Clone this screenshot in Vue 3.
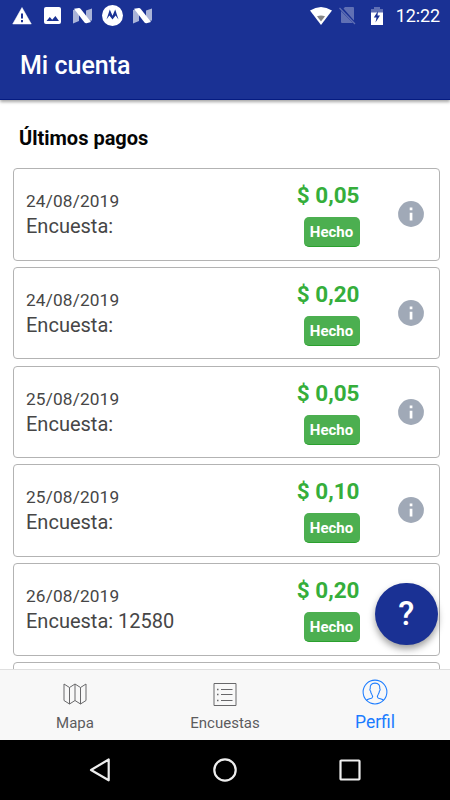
<script setup>
const payments = [
  { date: '24/08/2019', survey: '', amount: '0,05' },
  { date: '24/08/2019', survey: '', amount: '0,20' },
  { date: '25/08/2019', survey: '', amount: '0,05' },
  { date: '25/08/2019', survey: '', amount: '0,10' },
  { date: '26/08/2019', survey: '12580', amount: '0,20' },
]
</script>

<template>
  <div class="screen">
    <header class="header">
      <div class="status">
        <div class="status-left">
          <svg class="warn" width="20" height="18" viewBox="0 0 20 18"><path d="M10 .5 19.300 17H.7Z" fill="#fff" stroke="#fff" stroke-width=".5" stroke-linejoin="round" /><path d="M10 6.500v5M10 13v2.200" stroke="#1a3194" stroke-width="2" /></svg>
          <svg class="photo" width="17" height="17" viewBox="0 0 17 17"><rect width="17" height="17" rx="2" fill="#fff" /><path d="M2.500 14 5.800 10l2.400 2.700 3.200-3.800 3.600 5.100Z" fill="#1a3194" /></svg>
          <svg class="n-first" width="19" height="16" viewBox="0 0 19 16"><path d="M0 2 6 1v12l-6 2.500ZM13 2.500l6-2v12l-6 1Z" fill="#aab4d8" /><path d="M1 .8 6 0q1 0 1.800 1L18 14l-4.500 1.300q-1.200.2-2-.8Z" fill="#fff" /></svg>
          <svg class="moto" width="21" height="21" viewBox="0 0 21 21"><circle cx="10.500" cy="10.500" r="10.500" fill="#fff" /><path d="M4.500 14.500 7.800 4.500l2.700 6.200 2.700-6.200 3.300 10-2.900-4-3.100 4-3.100-4Z" fill="#1a3194" /></svg>
          <svg class="n-second" width="19" height="16" viewBox="0 0 19 16"><path d="M0 2 6 1v12l-6 2.500ZM13 2.500l6-2v12l-6 1Z" fill="#aab4d8" /><path d="M1 .8 6 0q1 0 1.800 1L18 14l-4.500 1.300q-1.200.2-2-.8Z" fill="#fff" /></svg>
        </div>
        <div class="status-right">
          <svg width="22" height="18" viewBox="0 0 22 18"><path d="M0 3.500Q11-3.500 22 3.500L11 18Z" fill="#fff" /><path d="M7 9.200q4-1.600 8 0l-4 5.200Z" fill="#868686" /></svg>
          <svg class="sim" width="17" height="19" viewBox="0 0 17 19"><path d="m4.500 2.500 1.500-1.500h8q1 0 1 1v12.500ZM2 5 14 17H3q-1 0-1-1Z" fill="#6070b4" /><path d="m.5 2 15.500 16" stroke="#6070b4" stroke-width="1.200" /></svg>
          <svg class="battery" width="12" height="18" viewBox="0 0 12 18"><path d="M0 6V2h3V0h6v2h3v4Z" fill="#6070b4" /><path d="M0 5.500h12V18H0Z" fill="#fff" /><path d="M7 4 2.800 10.500h2.700l-1 5L9 8.500H6.500Z" fill="#1a3194" /></svg>
          <span class="clock">12:22</span>
        </div>
      </div>
      <h1 class="title">Mi cuenta</h1>
    </header>

    <main class="content">
      <h2 class="section">Últimos pagos</h2>
      <div class="list">
        <article v-for="(payment, i) in payments" :key="i" class="card">
          <div class="details">
            <div class="date">{{ payment.date }}</div>
            <div class="survey">Encuesta: {{ payment.survey }}</div>
          </div>
          <div class="payment">
            <div class="amount">$ {{ payment.amount }}</div>
            <div class="badge">Hecho</div>
          </div>
          <svg class="info" width="26" height="26" viewBox="0 0 26 26"><circle cx="13" cy="13" r="12.900" fill="#a0a9b7" /><path d="M11.700 6.500h2.700v2.700h-2.700ZM11.700 11.700h2.700v7.800h-2.700Z" fill="#fff" /></svg>
        </article>
        <div class="card"></div>
      </div>
      <button class="help">?</button>
    </main>

    <nav class="tabs">
      <div class="tab">
        <svg class="tab-icon" width="24" height="24" viewBox="0 0 24 24" fill="none" stroke="#68686a" stroke-width="1"><path d="m1 2 5.500 3.500L12 2l5.500 3.500L23 2v16.500L17.500 22 12 18.500 6.500 22 1 18.500ZM6.500 5.500V22M12 2v16.500M17.500 5.500V22" /></svg>
        <span>Mapa</span>
      </div>
      <div class="tab">
        <svg class="tab-icon" width="24" height="24" viewBox="0 0 24 24" fill="none" stroke="#68686a" stroke-width="1"><path d="M1 1.500h22v22H1ZM8 7.500h11.500M8 12.500h11.500M8 18.500h11.500" /><path d="M4 7.500h1.500M4 12.500h1.500M4 18.500h1.500" stroke-width="1.500" /></svg>
        <span>Encuestas</span>
      </div>
      <div class="tab active">
        <svg class="tab-icon" width="26" height="26" viewBox="0 0 26 26" fill="none" stroke="#1b7cff" stroke-width="1.050"><circle cx="13" cy="13" r="11.900" /><path d="M4.500 21.300c1-1.200 4.500-1.600 5.500-2.500.8-.8.7-2.200 0-3-.9-1.200-1.300-2.500-1.400-3.700-1-.6-.8-2-.4-2.500-.3-3.400 1.200-5.500 4.800-5.500s5.100 2.100 4.800 5.500c.4.500.6 1.900-.4 2.500-.1 1.200-.5 2.500-1.400 3.700-.7.8-.8 2.200 0 3 1 .9 4.500 1.300 5.500 2.500" /></svg>
        <span>Perfil</span>
      </div>
    </nav>

    <footer class="system">
      <svg width="24" height="26" viewBox="0 0 24 26"><path d="M20.700 2.500v20.800L3 13Z" fill="none" stroke="#eee" stroke-width="2.200" stroke-linejoin="round" /></svg>
      <svg width="26" height="26" viewBox="0 0 26 26"><circle cx="13" cy="13" r="10.700" fill="none" stroke="#eee" stroke-width="2.200" /></svg>
      <svg width="24" height="24" viewBox="0 0 24 24"><rect x="2.500" y="2.500" width="19" height="19" rx=".7" fill="none" stroke="#eee" stroke-width="2.200" /></svg>
    </footer>
  </div>
</template>

<style>
body { margin: 0; }
</style>

<style scoped>
* { box-sizing: border-box; }
.screen {
  width: 450px;
  height: 800px;
  overflow: hidden;
  display: flex;
  flex-direction: column;
  position: relative;
  background: #fff;
  font-family: Roboto, sans-serif;
}
svg { display: block; flex: none; }
.header {
  height: 100px;
  flex: none;
  background: #1a3194;
  border-bottom: 1px solid #051b81;
  box-shadow: 0 2px 3px rgba(0, 0, 0, .35);
  color: #fff;
  position: relative;
}
.status {
  display: flex;
  justify-content: space-between;
  height: 31px;
  padding: 0 10px 0 12px;
}
.status-left, .status-right { display: flex; align-items: center; }
.photo { margin-left: 12px; }
.n-first { margin-left: 12px; }
.moto { margin-left: 10px; }
.n-second { margin-left: 10px; }
.sim { margin-left: 7px; }
.battery { margin-left: 15px; }
.clock { margin-left: 13px; font-size: 18px; line-height: 31px; letter-spacing: -.1px; }
.title {
  margin: 20px 0 0 20px;
  font-size: 25px;
  line-height: 30px;
  font-weight: 500;
}
.content {
  flex: none;
  height: 569px;
  padding: 25px 10px 0 12.500px;
  overflow: hidden;
}
.section {
  margin: 0 0 19px 6.500px;
  height: 24px;
  font-size: 20px;
  line-height: 26px;
  font-weight: 700;
  color: #050505;
}
.list { display: flex; flex-direction: column; gap: 6.250px; }
.card {
  height: 92.500px;
  flex: none;
  display: flex;
  border: 1.250px solid #b3b3b3;
  border-radius: 4px;
  padding: 0 15px 0 12.500px;
}
.details { flex: 1; padding-top: 20px; color: #464646; }
.date { font-size: 17.250px; line-height: 25px; letter-spacing: .15px; }
.survey { font-size: 20px; line-height: 25px; }
.payment { display: flex; flex-direction: column; align-items: flex-end; padding-top: 12px; }
.amount { font-size: 22.500px; line-height: 28px; font-weight: 700; color: #35ae3b; }
.badge {
  margin-top: 8px;
  width: 56px;
  height: 30px;
  border-radius: 5px;
  background: #4caf50;
  border-bottom: 1px solid #2aa02e;
  color: #fff;
  text-align: center;
  font-size: 15px;
  line-height: 30px;
  font-weight: 700;
}
.info { margin: 32px 0 0 38.500px; }
.help {
  position: absolute;
  left: 375px;
  top: 582.500px;
  width: 62.500px;
  height: 62.500px;
  padding: 0;
  border: 0;
  border-radius: 50%;
  background: #1a3194;
  box-shadow: 0 4px 7px rgba(0, 0, 0, .38);
  color: #fff;
  font: 500 33px/62px Roboto, sans-serif;
}
.tabs {
  position: relative;
  flex: none;
  height: 71px;
  display: flex;
  background: #f8f8f8;
  border-top: 1px solid #dfdfdf;
}
.tab {
  flex: 1;
  display: flex;
  flex-direction: column;
  align-items: center;
  padding-top: 12px;
  gap: 7px;
  color: #5c5c5e;
  font-size: 15px;
  line-height: 20px;
}
.active { padding-top: 9px; gap: 6px; color: #1b7cff; font-size: 17.500px; line-height: 22px; }
.system {
  flex: none;
  height: 60px;
  display: flex;
  align-items: center;
  justify-content: space-between;
  padding: 0 88px;
  background: #000;
}
</style>
